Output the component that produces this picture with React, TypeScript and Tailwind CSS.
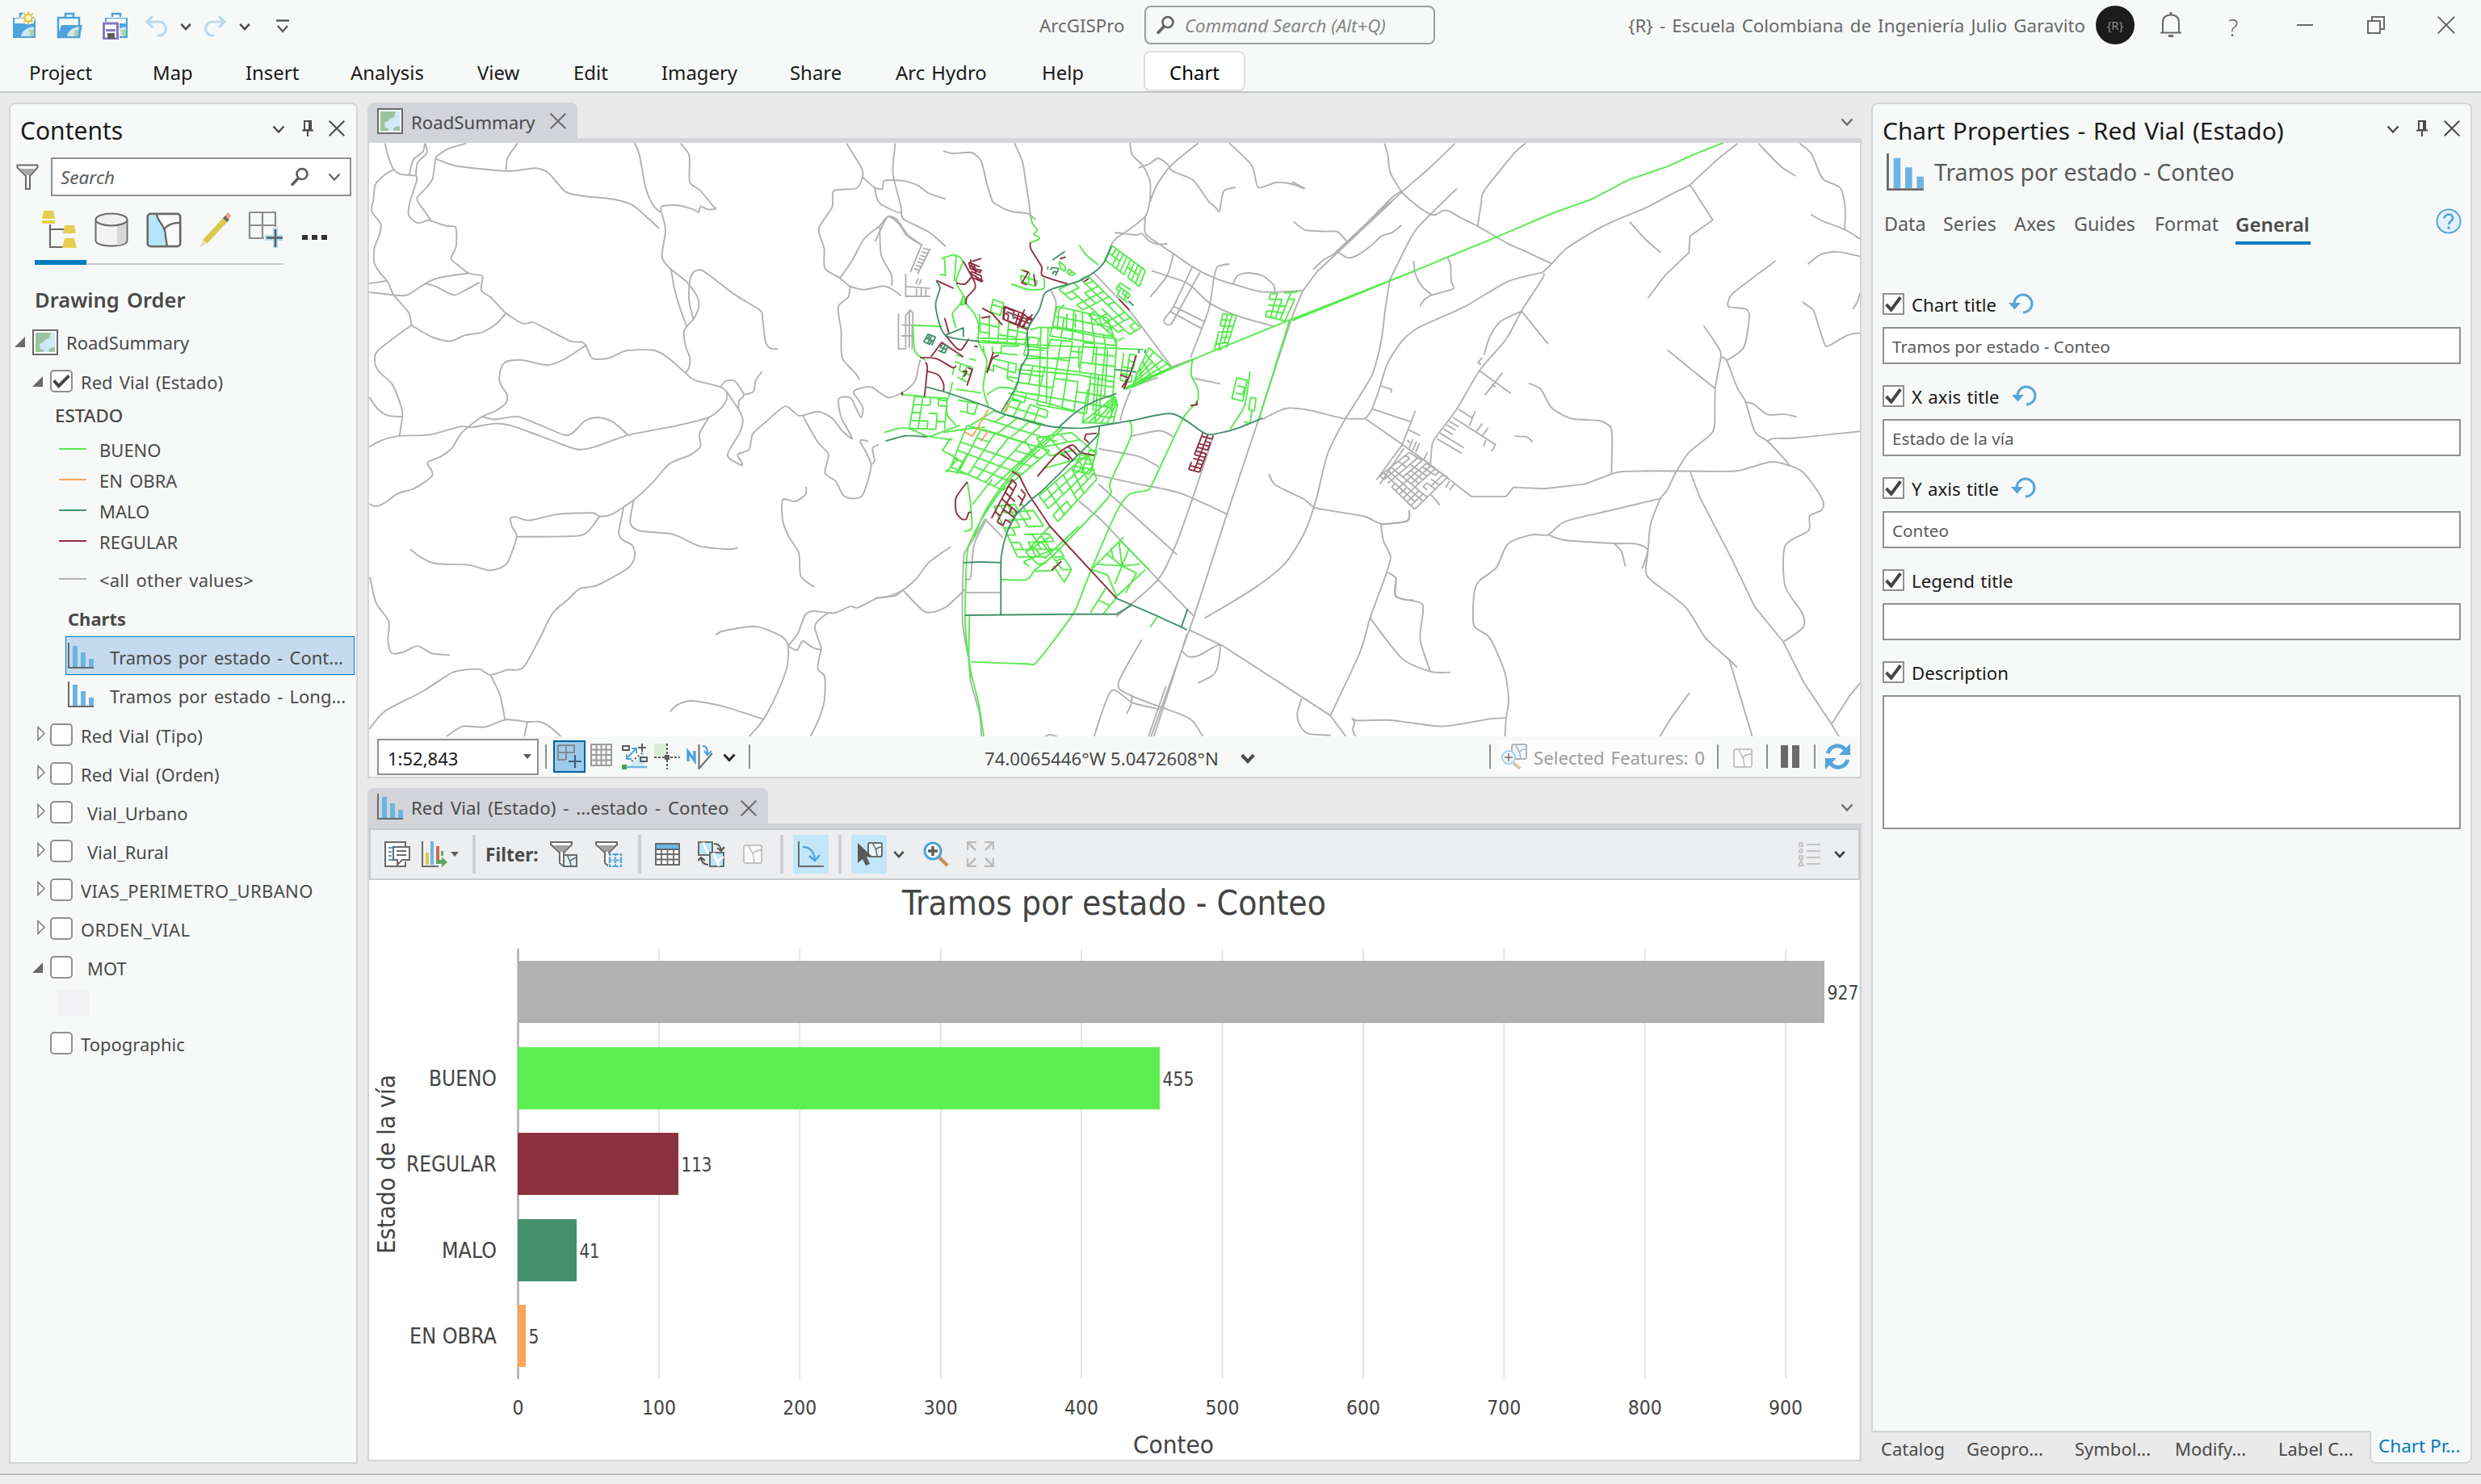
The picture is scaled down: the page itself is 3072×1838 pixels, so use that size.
import React from "react";

type Pt = [number, number];

const parse = (s: string): Pt[] =>
  s.trim().split(/\s+/).map((p) => p.split(",").map(Number) as Pt);

/* Smooth curve through the points of each road (Catmull-Rom to Bezier). */
const curve = (s: string): string => {
  const p = parse(s);
  let d = `M${p[0][0]},${p[0][1]}`;
  for (let i = 0; i < p.length - 1; i++) {
    const a = p[Math.max(0, i - 1)];
    const b = p[i];
    const c = p[i + 1];
    const e = p[Math.min(p.length - 1, i + 2)];
    const k = 8;
    d += `C${b[0] + (c[0] - a[0]) / k},${b[1] + (c[1] - a[1]) / k} ${c[0] - (e[0] - b[0]) / k},${c[1] - (e[1] - b[1]) / k} ${c[0]},${c[1]}`;
  }
  return d;
};

const straight = (s: string): string =>
  "M" + parse(s).map((p) => p.join(",")).join("L");

const curves = (src: string) => src.trim().split("\n").map((l) => curve(l)).join("");
const lines = (src: string) => src.trim().split("\n").map((l) => straight(l)).join("");

/* Street blocks inside a quadrilateral, with a share of segments left out. */
const mesh = (quad: string, n: number, m: number, skip = 0.14): string => {
  const [a, b, c, d] = parse(quad);
  const at = (u: number, v: number): Pt => [
    (a[0] * (1 - u) + b[0] * u) * (1 - v) + (d[0] * (1 - u) + c[0] * u) * v,
    (a[1] * (1 - u) + b[1] * u) * (1 - v) + (d[1] * (1 - u) + c[1] * u) * v,
  ];
  const seg = (p: Pt, q: Pt) =>
    `M${p[0].toFixed(1)},${p[1].toFixed(1)}L${q[0].toFixed(1)},${q[1].toFixed(1)}`;
  const hash = (i: number, j: number, k: number) => {
    const x = Math.sin(i * 12.9898 + j * 78.233 + k * 37.719 + a[0]) * 43758.5453;
    return x - Math.floor(x);
  };
  let out = "";
  for (let i = 0; i <= n; i++)
    for (let j = 0; j <= m; j++) {
      if (i < n && hash(i, j, 1) > skip) out += seg(at(i / n, j / m), at((i + 1) / n, j / m));
      if (j < m && hash(i, j, 2) > skip) out += seg(at(i / n, j / m), at(i / n, (j + 1) / m));
    }
  return out;
};

const WEST = curves(`60,15 68,45 84,78 104,90 145,93
84,78 58,92 33,115 28,150 23,180 48,210 45,235 30,270 30,305 45,328 68,352 84,383 125,425 133,456
170,15 165,35 138,55 127,92
172,15 176,38 150,62 146,92 148,105 128,160 126,190 150,208 178,202 188,203 228,215 256,219 257,265 243,295 262,310 292,330 328,336 330,345 327,372 355,390 395,427 442,452 470,449 500,462 575,495 605,497 617,505 635,537 680,536 730,518 805,517 845,535 893,572 918,589 990,606 1008,618
285,15 235,28 205,45 200,52 192,100 175,122 150,145 150,155 170,180 188,203
200,52 260,70 395,82 440,79 480,75 515,88 560,132 605,142 690,150 745,164 785,193 820,221
427,15 400,50 395,82
752,15 765,40 782,120 800,160 820,180 825,178 828,167 870,165 915,175 930,182 935,168 955,175 977,174 968,165 935,130 905,108 904,45 880,15
825,178 838,225 828,290 850,318 895,350 925,385 930,412 915,442 890,468 893,505 905,535 903,560 893,572
853,320 862,365 878,415 897,460
915,442 903,395 905,350 915,328 935,322 960,335 1030,382 1100,420 1107,440 1115,495 1128,512 1150,514
16,355 63,349
16,376 84,383 122,383 172,355 210,341 292,330
172,355 200,362 250,383 285,370 322,352
133,456 40,518 32,545 42,568 80,600 105,655 108,678 100,725
133,456 190,485 240,495 280,481 330,473 370,452 395,427
16,630 40,660 70,676 108,678
16,752 50,736 100,725 185,722 270,702 300,704 365,695 410,700 490,725 590,757 640,752 735,723 870,700 958,680 995,655 1008,635 1008,618
617,505 555,540 510,553 440,541 395,545 380,565 378,595 398,625 395,645 365,665 330,678 275,715 245,755 215,775 178,790 190,810 188,825 140,853 95,865 60,887 35,896 16,890
330,678 365,685 425,678 480,695 555,722 580,718 615,688 650,680 690,690 735,723
990,606 1005,592 1030,592 1055,625 1042,640 1040,660
1055,625 1082,617 1088,590 1106,569
1008,618 1040,660 1052,685 1045,715 1010,772 1048,796 1050,790 1038,770 1070,758 1080,720 1115,692 1170,653 1208,676 1260,666 1300,682 1325,710 1355,732 1345,712 1325,680 1318,635 1350,632 1365,655 1380,680 1385,655 1360,620 1375,610 1410,607 1455,632 1500,617 1530,592 1540,555 1545,540
958,680 932,720 935,750 905,772 850,792 800,840 750,880 690,915 655,920 635,912 540,915 460,930 425,922 408,925 412,945 425,970 400,1032 375,1047 345,1051 290,1038 200,1035 160,1020 130,1000
655,920 625,955 590,968 425,970
750,880 740,935 765,955 860,964 930,992 1010,1000 1038,997
722,898 708,960 720,978 745,990 753,1015 735,1045 650,1087 600,1096 570,1120 525,1155 490,1215 450,1280 430,1293 400,1293 352,1305 325,1292 290,1292 245,1300 165,1345 60,1393 16,1437
352,1305 378,1352 393,1415
230,1455 275,1430 335,1432 395,1414 455,1419 490,1419 520,1433 548,1455
455,1419 446,1455
18,1067 35,1130 70,1175 68,1220 78,1252 110,1250 150,1235 190,1253 240,1257
1218,675 1260,740 1290,770 1280,815 1310,835 1330,868 1355,877 1385,868 1408,795 1378,738 1400,738
1408,795 1418,785 1412,755 1430,746
1228,848 1226,868 1197,884 1163,880 1163,930 1180,970 1208,1010 1213,1065 1250,1092
1340,15 1382,75 1384,96 1368,124 1305,130 1300,170 1263,222 1278,270 1280,318 1322,342 1350,362 1390,370 1440,361 1465,368 1492,385
1350,362 1345,388 1317,412 1325,470 1328,535 1365,573 1376,589
1322,342 1355,300 1390,245 1432,215 1455,192 1480,200 1510,237 1550,262
1432,215 1436,285 1465,335 1465,360
1384,96 1418,122 1440,125 1445,105 1500,106 1540,118 1568,136 1615,150
1475,15 1468,80 1475,115 1492,182 1440,165 1425,150 1418,122
1492,182 1500,200 1568,230 1615,265
976,1208 1000,1198 1090,1188 1160,1212 1178,1235 1175,1285 1150,1345 1110,1413 1070,1455
1110,1413 1000,1382 910,1368 870,1378 850,1395
1178,1235 1205,1205 1225,1160 1250,1150 1305,1155 1350,1139 1372,1142 1425,1119 1475,1113 1495,1100
1178,1235 1203,1245 1218,1223 1245,1238 1270,1241 1252,1187 1285,1157 1305,1155
1270,1241 1260,1290 1280,1310 1278,1370 1262,1415 1240,1455`);

const NORTH = curves(`1256,177 1266,200 1270,225 1274,250
1168,187 1180,190 1203,189 1215,200 1222,228 1229,250
1399,177 1402,192 1415,205 1424,225 1424,250
1484,177 1450,205 1432,230 1424,250
1410,208 1423,203 1434,196 1445,203 1452,212 1476,222 1490,240 1497,250
1522,177 1550,205 1558,232 1580,226 1600,228 1615,234
1512,250 1516,236 1530,232`);

const CENTER_GRAY =
  curves(`430,18 455,27 500,33 520,50
400,0 430,18
502,0 506,38
837,0 825,40 775,80 745,100 728,122
825,40 823,80 835,98 900,142 955,180 1018,212 1068,228 1150,250 1265,246
740,85 800,92 815,88 835,108 860,118 886,116
1000,0 1018,14 1030,27 1035,0
1068,228 1080,205 1110,197 1150,205 1180,230 1184,247
903,142 885,205 838,264
842,191 890,207 945,228 1005,282 1085,318 1180,345
955,180 903,290 878,325 880,338 895,340 912,312 976,196
1058,172 1025,180 1015,212 1000,300 950,432
562,245 577,280 567,350
1500,0 1360,135 1320,160 1290,188
1236,55 1268,78 1325,82 1358,83 1382,108
1358,138 1385,155 1410,150 1450,122 1480,95 1510,85 1535,65
1503,215 1490,300 1480,380 1458,470 1440,505 1375,610 1330,700 1300,820 1270,910 1215,1000 1130,1070 990,1155
1150,603 1215,573 1280,578 1370,600 1435,602
1168,755 1185,785 1265,825 1300,850 1430,872 1478,893 1550,885 1558,860
1478,893 1485,940 1505,985 1490,1040 1448,1155 1420,1250 1338,1425
1497,1028 1520,1045 1518,1090 1540,1103 1568,1105
815,1215 750,1335 785,1370 930,1425 960,1445 985,1485
682,1485 730,1357 790,1390 865,1408
788,1367 785,1395 773,1420
925,1245 945,1262 975,1258 1030,1230 1025,1290 1010,1315 970,1335
545,1485 560,1478 585,1485
675,755 790,780 920,808 1055,868
695,685 805,706 862,735
785,650 865,635 903,652
1013,650 960,810 910,950 860,1048 745,1150
785,520 765,570 755,607
380,880 345,940 325,970 320,1000 318,1170 335,1270 340,1330 365,1420 370,1485
385,880 350,950 340,1042 325,1045
285,957 225,1000 190,1045 152,1077 110,1095 75,1100
152,1077 215,1138 270,1125 325,1075
1258,1378 1247,1415 1250,1445 1275,1475 1340,1480
1338,1425 1382,1485
1398,1432 1405,1445 1400,1465 1408,1485
75,110 110,42 140,60 165,95 205,120`) +
  lines(`680,195 780,300 898,458 960,435
1508,0 1380,120 1300,195 1262,246 1235,310 1225,340 1140,600 1050,870 960,1150 840,1485
940,1200 848,1485
882,1343 833,1485
903,290 988,332
895,305 982,352
960,490 1033,505
640,830 700,880 860,1048 960,1150
695,783 912,978
860,487 770,520
380,880 430,932
327,1084 424,1084
1338,1425 1040,1232 945,1187
205,118 173,195
228,130 193,200
208,128 226,134
204,138 222,144
200,148 218,154
196,157 214,163
192,166 210,172
188,175 206,181
183,185 200,191
195,212 188,228
204,214 197,230
160,200 160,262 228,262
160,235 228,240
190,240 190,262
203,240 203,262
216,240 216,262
140,310 140,408 162,408
160,405 160,315 172,300 180,308 180,340
170,300 170,405
178,340 178,410
148,342 180,342
148,372 180,372
1475,510 1507,520 1507,530`);

const GREEN =
  curves(`1225,328 1140,602
955,440 952,480 970,520 968,555 930,600 845,780 830,800 780,812 745,860 675,1020 640,1110 620,1150 525,1275 495,1282 340,1276
782,605 785,650 727,780 722,820 570,980 520,1020 495,1048 425,1048
600,625 475,740 390,850 345,930 330,980 325,1170 340,1300 362,1390 377,1485
590,625 470,735 385,850 350,930
337,1150 335,1270 342,1320
506,38 512,60 525,78 515,90 530,98 528,105 508,112
642,120 658,145 695,175
453,228 500,243 543,240 543,210
259,158 295,147 318,165 300,220 320,260 330,285 350,310 362,340 362,390 385,440 375,515 390,570
320,260 310,285 290,310 300,350
180,342 260,346
180,342 183,400 190,422 215,440
100,640 150,627 180,633 220,650 290,660
275,545 275,590 300,620
265,640 330,630 380,625
385,535 420,515 470,520
331,777 340,840 343,905 322,914
290,500 275,550 245,545
225,652 310,620
1115,470 1100,565 1060,630`) +
  lines(`770,520 900,462 1015,413 1225,328 1568,193
768,516 900,458
505,355 530,348 580,350 700,375 745,380 745,400
365,378 505,382
365,390 820,410
495,435 640,432
470,465 640,480 740,500
440,485 475,490
445,530 630,580
580,355 585,300 600,285
605,352 608,310
630,350 632,310
535,350 530,540
555,350 550,560
500,410 545,412
640,405 640,460
690,400 680,580
720,410 712,540
665,520 650,615
695,480 685,615
150,530 155,535 212,540
268,158 270,205 255,200
300,150 295,220
403,270 432,282 422,315 395,305 403,270
400,285 425,292
675,1020 755,940 835,1020
755,940 765,930
675,1020 720,1035 745,1095 825,1020
685,1005 760,1010 740,1060
715,975 760,1010 752,945
780,960 760,1010 810,1005
760,1010 800,1030 770,1085
730,960 735,990
715,1072 672,1140
745,1098 708,1143
695,1105 725,1120
858,1152 838,1180
620,1020 600,1055 570,1010
1078,488 1065,545 1095,553 1107,495 1078,488
1080,510 1100,515 1095,535 1075,530
1117,542 1132,546 1127,580 1111,576 1117,542
1120,580 1115,615 1098,610
697,640 675,750
270,745 330,755
285,655 262,690 305,712
305,712 272,750
345,840 400,770
300,755 330,700
560,900 500,965
640,900 545,990
782,605 775,610`) +
  mesh("500,375 745,400 730,600 455,550", 8, 7, 0.17) +
  mesh("580,290 720,322 745,400 560,372", 6, 3, 0.15) +
  mesh("585,243 665,205 812,350 750,385", 4, 10, 0.2) +
  mesh("365,312 500,350 490,395 367,385", 5, 3, 0.25) +
  mesh("375,400 475,400 460,500 385,460", 4, 4, 0.45) +
  mesh("733,122 825,190 808,235 712,160", 9, 2, 0.08) +
  mesh("755,225 785,245 775,280 738,250", 4, 3, 0.15) +
  mesh("835,405 898,460 788,515 800,480", 5, 4, 0.05) +
  mesh("765,420 798,425 785,500 755,495", 2, 4, 0.2) +
  mesh("1172,255 1248,250 1212,330 1158,318", 4, 4, 0.15) +
  mesh("1040,310 1078,315 1050,405 1016,412", 3, 6, 0.15) +
  mesh("330,620 560,690 430,800 285,735", 6, 5, 0.06) +
  mesh("405,580 600,640 560,690 340,620", 6, 2, 0.15) +
  mesh("455,545 555,580 545,618 430,588", 4, 2, 0.2) +
  mesh("490,660 620,640 690,700 540,740", 4, 3, 0.3) +
  mesh("530,815 665,700 690,770 582,887", 6, 4, 0.08) +
  mesh("650,690 690,690 670,755 625,745", 2, 5, 0.1) +
  mesh("185,540 275,545 268,632 170,628", 4, 4, 0.2) +
  mesh("405,845 500,835 600,985 470,985", 5, 7, 0.26) +
  mesh("470,985 560,930 620,1020 520,1025", 4, 3, 0.3) +
  mesh("740,540 748,560 735,615 650,612", 5, 3, 0.2) +
  mesh("300,425 355,440 330,500 290,480", 3, 3, 0.5) +
  mesh("300,520 370,530 350,590 310,580", 2, 2, 0.3) +
  mesh("585,165 630,200 620,205 590,185", 5, 1, 0.1) +
  mesh("478,188 530,205 520,235 480,220", 2, 2, 0.3) +
  mesh("310,262 325,265 322,285 310,285", 2, 1, 0.1);

const MAROON =
  curves(`506,112 507,130 537,180 540,205 610,228
525,762 580,700 622,675 645,695 683,703
331,777 300,820 300,860 315,880 328,880 335,862 342,862
200,432 245,435 290,460 300,455
215,445 220,460 212,542
220,470 250,480 265,505 265,525
270,370 300,405 315,410 335,380
327,285 330,265 352,240 350,220 320,165
300,225 325,228 345,205
403,417 385,475
418,425 400,435 388,470`) +
  lines(`455,748 475,760 500,810 560,900 745,1100
690,642 660,645 656,658 668,668
230,430 260,390 320,430
245,218 293,240
345,165 370,157
340,160 345,185 372,190
350,205 375,220
268,322 280,365
372,295 400,310 428,342
370,322 395,318
433,290 485,310 510,330
433,290 430,325 500,355
485,310 470,350
490,298 470,345
512,312 480,350
440,305 495,325
485,190 500,195 482,225 497,230
515,200 520,232
800,425 782,480 765,520
755,480 778,488 760,515
565,1022 592,997
332,460 345,465 330,510
318,470 330,470 322,485
350,400 360,402
752,270 780,300
655,222 668,212
588,158 604,153
968,553 968,563 950,565
150,528 150,537
600,690 625,718
612,680 638,705
590,700 615,715`) +
  mesh("985,640 1013,648 975,750 945,742", 2, 10, 0.12) +
  mesh("455,770 492,812 445,908 398,878", 3, 6, 0.25) +
  mesh("335,168 365,180 372,222 345,210", 2, 5, 0.3) +
  mesh("435,292 512,325 498,352 432,325", 6, 2, 0.25);

const TEAL =
  curves(`215,513 270,528 390,570 430,588 545,620 600,627 660,627 780,608 900,588 985,640 1010,645 1075,630 1150,600
730,122 715,160 690,190 640,220 570,240 545,255 530,300 498,355 500,420 480,460 468,510 425,583
585,625 630,585 680,555 745,532
697,622 690,650 620,720 540,800 510,825 465,870 440,920 425,985 424,1060
104,664 160,649 220,652
245,220 255,240 243,290 270,370 365,387
320,1001 370,999 424,1001`) +
  lines(`424,1000 424,1148
325,1147 620,1144 745,1144 788,1118
745,1100 860,1150 940,1187
942,1130 925,1178
270,370 320,350 320,375
567,162 602,137
740,465 800,472
778,275 792,288
808,408 806,420
825,410 823,420
455,310 460,325`) +
  mesh("222,367 243,375 232,398 210,388", 4, 2, 0.1) +
  mesh("262,395 278,400 268,420 250,412", 2, 2, 0.2) +
  mesh("555,180 585,185 575,205 552,195", 3, 2, 0.4);

const ORANGE = lines(`390,575 345,650 322,638
435,558 445,563 438,583
389,635 368,665`);

const EAST =
  curves(`252,15 262,45 268,85 300,133 340,165 380,188 395,187 412,178 430,180 460,195 507,216 590,258 640,278 710,307
445,15 375,75 300,133 120,278
300,130 275,145 190,220 120,278
638,15 608,38 525,130 517,160 507,216
0,108 35,125
450,125 375,190 330,235 265,350
332,300 337,332 355,362 382,383
425,292 433,310 435,350 440,368 382,383 360,395 350,410
1218,15 1155,60 1088,115 1050,132 970,170 880,203 825,228 750,270 710,307 685,328
1275,15 1335,70 1377,94
1388,15 1420,40 1450,100 1498,122 1512,170 1511,224
1418,187 1450,203 1511,224 1553,247
923,205 965,247 1008,280
1410,308 1445,285 1490,278 1553,289
1322,300 1210,375 1192,400 1195,412 1240,417 1250,435 1235,510 1188,542
1125,457 1165,510 1172,533 1157,610 1155,700 1140,725 1085,765 1050,812 1025,857 1007,877 980,940 973,1005 967,1055 985,1078 1075,1140 1130,1215 1195,1268 1217,1287
1195,1268 1228,1365 1258,1455
1027,517 1100,570 1157,610
1172,533 1188,542 1218,610 1240,643 1265,715 1300,738 1345,780 1360,797
1240,643 1260,647 1300,673 1345,672 1380,679
1300,738 1315,731 1375,730 1553,714
1395,400 1425,420 1440,460 1455,500 1465,507 1520,480 1553,475
1553,378 1545,400 1533,418
685,328 590,350 470,412 345,462 300,495 260,550 235,620 215,665 200,683
687,330 685,342 627,422 585,490 512,567 450,660 395,725 383,745 378,793
627,422 570,447 540,485 525,528
647,597 680,612 710,657 765,683 840,688 870,703 875,730 873,818
872,818 900,812 1000,810 1200,811 1240,805 1310,788 1360,797 1395,812 1430,850 1452,885 1448,905 1415,920 1412,955 1348,992 1348,1090 1395,1155 1397,1190 1343,1225
1007,877 860,908 745,933 700,965 655,965 590,987 558,1045 510,1078 497,1110 497,1185 540,1215 580,1295 592,1365 585,1410 582,1455
700,965 745,978 880,986 940,987 972,1002 957,1047
880,986 900,1005 911,1042
585,1410 540,1412 410,1430 270,1415 180,1416 163,1410
608,726 640,727 658,740
285,1070 283,1115 350,1130 358,1150 350,1220 378,1297
213,1167 300,1265 378,1297 432,1299
320,905 315,932 245,940`) +
  lines(`1088,115 1150,201 1088,240 1085,280 1020,335 973,390
627,422 700,502
512,567 598,622
575,572 527,626
520,535 508,547 516,552
545,600 556,606
220,660 323,690
337,664 300,748 230,832
318,710 350,724
200,683 300,745 378,795 490,872 585,872 605,850 690,853 800,842 872,818
1088,812 1115,875 1200,1020 1265,1140 1343,1225 1400,1325 1475,1425 1495,1455
1475,1425 1525,1355 1553,1325
1087,1348 1040,1405 1005,1455
455,660 495,683
500,665 485,700
440,680 556,746 545,763
430,690 455,703
422,698 447,711
414,708 440,722
404,718 470,754
396,732 463,767
520,695 503,715
536,705 520,725
530,735 523,750
305,755 240,842
315,735 322,742
330,733 320,755
340,738 330,760
348,742 338,764
370,765 360,782
430,835 420,850
443,842 430,857
380,868 404,893`) +
  mesh("320,765 425,825 335,903 240,822", 9, 8, 0.18);

const EAST_GREEN = lines(`0,445 195,375 420,293 560,242 710,185 820,150 920,103 1030,70 1095,43 1180,13`);

function RoadMap() {
  const gray = "#b1b1b1";
  return (
    <svg viewBox="457 177 1846 735" className="block h-[735px] w-[1846px] bg-white" fill="none" strokeWidth="1.9" strokeLinejoin="round">
      <g transform="translate(450 170) scale(.4464 .5102)" stroke={gray}>
        <path d={WEST} vectorEffect="non-scaling-stroke" />
      </g>
      <path d={NORTH} stroke={gray} />
      <g transform="translate(1600 170) scale(.4528 .5102)">
        <path d={EAST} stroke={gray} vectorEffect="non-scaling-stroke" />
        <path d={EAST_GREEN} stroke="#55ea4b" vectorEffect="non-scaling-stroke" />
      </g>
      <g transform="translate(1050 250) scale(.4464)">
        <path d={CENTER_GRAY} stroke={gray} vectorEffect="non-scaling-stroke" />
        <path d={GREEN} stroke="#55ea4b" vectorEffect="non-scaling-stroke" />
        <path d={ORANGE} stroke="#f7a55d" vectorEffect="non-scaling-stroke" />
        <path d={MAROON} stroke="#8c3141" vectorEffect="non-scaling-stroke" />
        <path d={TEAL} stroke="#45916e" vectorEffect="non-scaling-stroke" />
      </g>
    </svg>
  );
}

/* ---------- icons ---------- */

type IconProps = { c?: string; vb?: string; children: React.ReactNode };
const Ico = ({ c = "w-8 h-8", vb = "0 0 32 32", children }: IconProps) => (
  <svg viewBox={vb} className={`block shrink-0 ${c}`} fill="none">
    {children}
  </svg>
);

const Chevron = ({ c = "w-4 h-4", stroke = "#4a4a4a", w = 2.4 }: { c?: string; stroke?: string; w?: number }) => (
  <Ico c={c} vb="0 0 16 16">
    <path d="M1.5 4.5 8 11.5l6.5-7" stroke={stroke} strokeWidth={w} />
  </Ico>
);

const Close = ({ c = "w-5 h-5", stroke = "#4a4a4a", w = 2 }: { c?: string; stroke?: string; w?: number }) => (
  <Ico c={c} vb="0 0 20 20">
    <path d="m.7.7 18.6 18.6M19.3.7.7 19.3" stroke={stroke} strokeWidth={w} />
  </Ico>
);

const Pin = ({ c = "" }: { c?: string }) => (
  <Ico c={`w-4 h-5 ${c}`} vb="0 0 16 20">
    <path d="M4 1h8v11H4zM1 12.5h14M8 13v7" stroke="#4a4a4a" strokeWidth="2" />
    <path d="M10.5 1v11" stroke="#4a4a4a" strokeWidth="3" />
  </Ico>
);

const Magnifier = ({ c = "" }: { c?: string }) => (
  <Ico c={`w-6 h-6 ${c}`} vb="0 0 24 24">
    <circle cx="15" cy="8.5" r="6.5" stroke="#5f5f5f" strokeWidth="2.6" />
    <path d="M10.5 13.5 2 22.5" stroke="#5f5f5f" strokeWidth="3.4" />
  </Ico>
);

const MapGlyph = ({ c = "" }: { c?: string }) => (
  <Ico c={`w-8 h-8 ${c}`}>
    <path d="M1 1h30v30H1z" fill="#fff" stroke="#6a6a6a" strokeWidth="2" />
    <path d="M4 4h24v24H4z" fill="#d0e8f7" />
    <path d="M4 4h19l-2 7-5 2-3 3-4 2 1 6 5 2-2 2H4z" fill="#9cc49c" />
    <path d="m28 22-5 1-3 2 1 3h7z" fill="#9cc49c" />
  </Ico>
);

const BarsGlyph = ({ c = "w-8 h-8" }: { c?: string }) => (
  <Ico c={c}>
    <path d="M6 4h6v26H6zM16 12h6v18h-6zM26 20h6v10h-6z" fill="#6cb5e3" />
    <path d="M1 0v31h31" stroke="#6a6a6a" strokeWidth="2" />
  </Ico>
);

const Funnel = ({ c = "" }: { c?: string }) => (
  <Ico c={`w-7 h-8 ${c}`} vb="0 0 28 32">
    <path d="M1.5 1.5h25v3L17 15v16h-5V15L1.5 4.5z" fill="#fafafa" stroke="#6a6a6a" strokeWidth="2" />
    <path d="M4 6h20l-7 8h-5z" fill="#a8a8a8" />
  </Ico>
);

const Sun = () => (
  <g>
    <circle cx="22" cy="9" r="8.5" fill="#f7f9f8" />
    <path d="M22 1v16M14 9h16M16.5 3.5l11 11M27.5 3.5l-11 11" stroke="#e0c24c" strokeWidth="2" />
    <circle cx="22" cy="9" r="4.5" fill="#fbf3c8" stroke="#e0c24c" strokeWidth="2" />
  </g>
);

const FolderMap = ({ kind, c = "" }: { kind: "new" | "open" | "save"; c?: string }) => (
  <Ico c={`w-9 h-9 ${c}`} vb="0 0 36 36">
    <path d="M12 8V4h10v4" stroke="#4da3dc" strokeWidth="2.5" />
    {kind === "open" ? (
      <>
        <path d="M3 9h26v24H3z" fill="#f7f9f8" stroke="#4da3dc" strokeWidth="2.5" />
        <path d="M2 33 7 18h26l-3 15z" fill="#4da3dc" />
        <path d="M14 32c1-6 6-11 15-12l-2 12z" fill="#cfe6f4" />
        <path d="M24 24h4l-1 8h-5z" fill="#a9d3a0" />
      </>
    ) : (
      <>
        <path d="M3 9h28v25H3z" fill="#4da3dc" />
        <path d="M5 10h24v6H5z" fill="#f7f9f8" />
        <path d="M13 32c1-6 6-11 16-12v12z" fill="#cfe6f4" />
        <path d="M23 24h6v8h-4z" fill="#a9d3a0" />
      </>
    )}
    {kind === "new" && <Sun />}
    {kind === "save" && (
      <>
        <path d="M-1 14h22v23H-1z" fill="#f7f9f8" />
        <path d="M1.5 16h17v19h-17z" fill="#fff" stroke="#8a78bd" strokeWidth="3" />
        <path d="M4 24.5h12" stroke="#8a78bd" strokeWidth="3" />
        <path d="M6 28h9v7H6z" fill="#5f5f5f" />
      </>
    )}
  </Ico>
);

const Undo = ({ c = "", flip = false }: { c?: string; flip?: boolean }) => (
  <Ico c={`w-7 h-7 ${flip ? "-scale-x-100" : ""} ${c}`} vb="0 0 28 28">
    <path d="M9 1 2 8l7 7M3 8h14a8.5 8.5 0 0 1 0 17h-2" stroke="#b9d9ef" strokeWidth="3.2" />
  </Ico>
);

const Reset = ({ c = "" }: { c?: string }) => (
  <Ico c={`w-8 h-7 ${c}`} vb="0 0 32 28">
    <path d="M7 13A11 11 0 1 1 18 24" stroke="#55a5dc" strokeWidth="3" />
    <path d="M0 12h15l-7.5 8.500z" fill="#55a5dc" />
  </Ico>
);

const PolyMap = ({ c = "w-6 h-6", stroke = "#b4b4b4", fill = "#fafafa" }: { c?: string; stroke?: string; fill?: string }) => (
  <Ico c={c} vb="0 0 24 24">
    <rect x="1" y="1" width="22" height="22" rx="2" fill="#fafafa" stroke={stroke} strokeWidth="1.500" />
    <path d="M2 2h6c1 5 4 8 5 12v8H2z" fill={fill} />
    <path d="M7 1c1 6 6 8 6 14 0 3 1 5 1 8M12 12c2-4 6-5 11-5" stroke={stroke} strokeWidth="1.300" />
  </Ico>
);

const Sep = ({ c = "" }: { c?: string }) => <div className={`h-[30px] w-[2px] shrink-0 bg-[#8f8f8f] ${c}`} />;
const ToolSep = ({ c = "" }: { c?: string }) => <div className={`h-12 w-1 shrink-0 bg-[#cfcfd1] ${c}`} />;

/* ---------- header ---------- */

function TitleBar() {
  return (
    <div className="flex h-[62px] items-center text-[22.3px] text-[#6a6a6a]">
      <FolderMap kind="new" c="ml-[13px]" />
      <FolderMap kind="open" c="ml-5" />
      <FolderMap kind="save" c="ml-[22px]" />
      <Undo c="ml-[17px] mt-1" />
      <Chevron c="ml-[15px] w-3.5 h-3.5 mt-1" w={3} />
      <Undo c="ml-[15px] mt-1" flip />
      <Chevron c="ml-4 w-3.5 h-3.5 mt-1" w={3} />
      <Ico c="ml-8 mt-1 w-4 h-[18px]" vb="0 0 16 18">
        <path d="M0 1.5h16M2 8l6 7 6-7" stroke="#5a5a5a" strokeWidth="2.4" />
      </Ico>
      <span className="ml-[929px] w-[103px] pt-[3px]">ArcGISPro</span>
      <div className="ml-[27px] flex h-12 w-[360px] items-center rounded-lg border-2 border-[#9d9fa0]">
        <Magnifier c="ml-3" />
        <span className="ml-3 pt-[3px] text-[#868686] italic">Command Search (Alt+Q)</span>
      </div>
      <span className="ml-[239px] w-[563px] pt-[3px] [word-spacing:2.3px]">{"{R} - Escuela Colombiana de Ingeniería Julio Garavito"}</span>
      <div className="ml-4 flex size-12 items-center justify-center rounded-full bg-[#1b1b1b] text-[15px] text-[#8a8a8a]">{"{R}"}</div>
      <Ico c="ml-8 w-6.5 h-8" vb="0 0 26 32">
        <path d="M3 25.5V13C3 6 7 3.5 13 3.5S23 6 23 13v12.500M0 25.500h26" stroke="#6a6a6a" strokeWidth="2" />
        <path d="M13 0v4M10 29.500h6" stroke="#6a6a6a" strokeWidth="3" />
      </Ico>
      <span className="ml-[58px] w-[14px] pt-1 text-[29px] font-light">?</span>
      <div className="ml-[71px] h-[2px] w-5 bg-[#6a6a6a]" />
      <Ico c="ml-[67px] w-5.5 h-5.5" vb="0 0 22 22">
        <path d="M1 6h15v15H1zM6 6V1h15v15h-5" stroke="#6a6a6a" strokeWidth="2" />
      </Ico>
      <Close c="ml-[65px] w-[22px] h-[22px]" stroke="#6a6a6a" w={1.7} />
    </div>
  );
}

function Menu() {
  return (
    <div className="flex h-[51px] items-center text-[23.9px] text-[#1a1a1a]">
      <div className="flex w-[1416px] pt-[5px] pl-9">
        <span className="w-[153px]">Project</span>
        <span className="w-[115px]">Map</span>
        <span className="w-[130px]">Insert</span>
        <span className="w-[157px]">Analysis</span>
        <span className="w-[119px]">View</span>
        <span className="w-[109px]">Edit</span>
        <span className="w-[159px]">Imagery</span>
        <span className="w-[131px]">Share</span>
        <span className="w-[181px] [word-spacing:2px]">Arc Hydro</span>
        <span>Help</span>
      </div>
      <div className="flex h-12.5 w-[126px] items-center justify-center rounded-lg border-2 border-[#dedfdf] bg-white pt-[5px] text-black">Chart</div>
    </div>
  );
}

/* ---------- contents pane ---------- */

const Check = ({ on = false, c = "" }: { on?: boolean; c?: string }) => (
  <div className={`flex size-7 shrink-0 items-center justify-center rounded-[5px] border-2 border-[#8f8f8f] bg-white ${c}`}>
    {on && (
      <svg viewBox="0 0 20 20" className="size-5.5" fill="none">
        <path d="m1.5 9.5 5.5 6L18.5 4" stroke="#444" strokeWidth="3.6" />
      </svg>
    )}
  </div>
);

const Opened = ({ c = "" }: { c?: string }) => (
  <Ico c={`w-[13px] h-[13px] ${c}`} vb="0 0 13 13">
    <path d="M13 0v13H0z" fill="#6a6a6a" />
  </Ico>
);
const Collapsed = ({ c = "" }: { c?: string }) => (
  <Ico c={`w-[10px] h-[19px] ${c}`} vb="0 0 10 19">
    <path d="M1 1.5 9 9.5l-8 8z" fill="#fff" stroke="#7a7a7a" strokeWidth="1.5" />
  </Ico>
);

const LEGEND = [
  { label: "BUENO", bar: "bg-[#55ea4b]" },
  { label: "EN OBRA", bar: "bg-[#f7a55d]" },
  { label: "MALO", bar: "bg-[#45916e]" },
  { label: "REGULAR", bar: "bg-[#8c3141]" },
];

const LAYERS = [
  { label: "Red Vial (Tipo)", pad: "ml-[10px]" },
  { label: "Red Vial (Orden)", pad: "ml-[10px]" },
  { label: "Vial_Urbano", pad: "ml-[18px]" },
  { label: "Vial_Rural", pad: "ml-[18px]" },
  { label: "VIAS_PERIMETRO_URBANO", pad: "ml-[10px] tracking-[0.35px]" },
  { label: "ORDEN_VIAL", pad: "ml-[10px] tracking-[0.35px]" },
];

function Contents() {
  return (
    <section className="ml-[11px] flex h-[1686px] w-[432px] flex-col rounded-t-lg border-2 border-[#d3d4d9] bg-[#f7f9f8] text-[22px] text-[#4a4a4a] [word-spacing:2.5px]">
      <div className="flex h-[66px] items-center">
        <h2 className="ml-3 w-[312px] text-[30px] text-[#1a1a1a]">Contents</h2>
        <Chevron c="w-4 h-4 -mt-1" />
        <Pin c="ml-[20px] -mt-1.5" />
        <Close c="ml-[18px] w-5 h-5 -mt-1.5" />
      </div>
      <div className="flex h-12">
        <Funnel c="ml-[7px] mt-2" />
        <div className="ml-[15px] flex h-12 w-[372px] items-center border-2 border-[#909090] bg-white">
          <span className="ml-2.5 w-[284px] pt-0.5 text-[22.5px] text-[#5a5a5a] italic">Search</span>
          <Magnifier />
          <Chevron c="ml-[23px] w-4 h-4" stroke="#6a6a6a" />
        </div>
      </div>
      <div className="mt-[18px] flex h-[61px] text-[#6a6a6a]">
        <Ico c="ml-[37px] w-12 h-12" vb="0 0 48 48">
          <path d="M12 17v28h16M12 23h18" stroke="#6a6a6a" strokeWidth="2.2" />
          <path d="M4 0h12l2 10H2zM2 12h16v4H2zM30 18h12l2 10H28zM28 24h16M30 34h12l3 12H27z" fill="#e5cf50" />
        </Ico>
        <Ico c="ml-[19px] mt-0.5 w-10.5 h-11" vb="0 0 42 44">
          <path d="M1.5 9v26c0 9 39 9 39 0V9" fill="#f4f4f4" stroke="#6a6a6a" strokeWidth="2" />
          <path d="M28 15v26c6-1 11-3 11-6V10z" fill="#d8d8d8" />
          <ellipse cx="21" cy="9" rx="19.5" ry="7.5" fill="#f0f0f0" stroke="#6a6a6a" strokeWidth="2" />
        </Ico>
        <PolyMap c="ml-[22px] mt-0.5 w-11 h-11" stroke="#6a6a6a" fill="#b3e7f9" />
        <Ico c="ml-[22px] w-10 h-12" vb="0 0 40 48">
          <path d="M1 45 5 35 32 6l5 5L10 40z" fill="#dcc84a" />
          <path d="M1 45 4.500 36l5 4z" fill="#f3dcb4" />
          <path d="m29 9 5 5 3-3-5-5z" fill="#6a6a6a" />
          <path d="m32 6 3-4 4 4-3 5z" fill="#e9a08c" />
        </Ico>
        <Ico c="ml-5 mt-px w-11 h-[46px]" vb="0 0 44 46">
          <path d="M2 1h32v18M2 1v32h18M18 1v32M2 17h32" stroke="#8d8d8d" strokeWidth="2.2" />
          <path d="M31 20h6v25h-6zM21 29h22v7H21z" fill="#a9dcf7" />
          <path d="M34 22v22M23 32.500h20" stroke="#5a5a5a" strokeWidth="2.4" />
        </Ico>
        <Ico c="ml-[22px] mt-[29px] w-8 h-2" vb="0 0 32 8">
          <path d="M1 1h7v6H1zM13 1h7v6h-7zM25 1h7v6h-7z" fill="#333" />
        </Ico>
      </div>
      <div className="ml-[30px] flex h-[6px] w-[308px] items-end">
        <div className="h-[6px] w-16 bg-[#007ac2]" />
        <div className="h-[2px] flex-1 bg-[#c8c8c8]" />
      </div>
      <div className="mt-[16px] ml-[30px] flex h-[53px] items-center pt-0.5 text-[25.500px] font-semibold">Drawing Order</div>
      <div className="flex h-[53px] items-center">
        <Opened c="ml-[5px]" />
        <MapGlyph c="ml-[9px]" />
        <span className="ml-[10px] pt-px">RoadSummary</span>
      </div>
      <div className="flex h-11 items-center">
        <Opened c="ml-[27px]" />
        <Check on c="ml-[9px]" />
        <span className="ml-[10px] pt-px">Red Vial (Estado)</span>
      </div>
      <div className="ml-[55px] flex h-[43px] items-center pb-px text-[22.400px] font-medium">ESTADO</div>
      {LEGEND.map((l) => (
        <div key={l.label} className="flex h-[38px] items-center">
          <div className={`ml-[60px] h-[2px] w-[34px] ${l.bar}`} />
          <span className="ml-4 pt-0.5">{l.label}</span>
        </div>
      ))}
      <div className="mt-[3px] flex h-[50px] items-center">
        <div className="ml-[60px] h-[2px] w-[34px] bg-[#b1b1b1]" />
        <span className="ml-4 pt-0.5 tracking-[0.2px]">&lt;all other values&gt;</span>
      </div>
      <div className="ml-[71px] flex h-[46px] items-center pt-0.5 font-bold">Charts</div>
      <div className="ml-[68px] flex h-12 w-[358px] items-center border border-[#007ac2] bg-[#c5daed]">
        <BarsGlyph c="ml-0.5 w-8 h-8" />
        <span className="ml-5 pt-[3px]">Tramos por estado - Cont...</span>
      </div>
      <div className="ml-[68px] flex h-12 w-[358px] items-center">
        <BarsGlyph c="ml-[3px] w-8 h-8" />
        <span className="ml-5 pt-[3px]">Tramos por estado - Long...</span>
      </div>
      <div className="pt-0.5">
        {LAYERS.map((l) => (
          <div key={l.label} className="flex h-12 items-center">
            <Collapsed c="ml-[33px] -mt-1" />
            <Check c="ml-[6px]" />
            <span className={`pt-0.5 ${l.pad}`}>{l.label}</span>
          </div>
        ))}
      </div>
      <div className="flex h-12 items-center">
        <Opened c="ml-[27px]" />
        <Check c="ml-[9px]" />
        <span className="ml-[18px] pt-0.5">MOT</span>
      </div>
      <div className="mt-[4px] ml-[57px] h-8 w-10 bg-[#f1f1f3]" />
      <div className="mt-[10px] flex h-12 items-center">
        <Check c="ml-[49px]" />
        <span className="ml-[10px] pt-0.5">Topographic</span>
      </div>
    </section>
  );
}

/* ---------- map and chart panes ---------- */

function MapPane() {
  return (
    <section>
      <div className="flex h-[44px] justify-between">
        <div className="flex h-[50px] w-[260px] items-center rounded-t-lg bg-[#d3d4d9] text-[22.200px] text-[#4a4a4a]">
          <MapGlyph c="ml-3 -mt-1" />
          <span className="ml-[10px] w-[155px]">RoadSummary</span>
          <Close c="ml-[17px] -mt-1 w-5 h-5" stroke="#6a6a6a" />
        </div>
        <Chevron c="mt-4 mr-[10px] w-4 h-4" stroke="#6a6a6a" />
      </div>
      <div className="h-[6px] bg-[#d3d4d9]" />
      <div className="border-x-2 border-b-2 border-[#d3d4d9]">
        <RoadMap />
        <div className="flex h-[50px] items-center bg-[#f7f9f8] text-[22px] text-[#4a4a4a]">
          <div className="ml-[10px] flex h-[45px] w-[200px] items-center justify-between border-2 border-[#909090] bg-white px-[11px] text-[22px] text-[#1a1a1a]">
            <span className="pt-[3px]">1:52,843</span>
            <Ico c="w-[10px] h-[6px] -mr-1" vb="0 0 10 6">
              <path d="M0 0h10L5 6z" fill="#5a5a5a" />
            </Ico>
          </div>
          <Sep c="ml-2" />
          <div className="ml-2 flex size-10 items-center justify-center border-2 border-[#00619b] bg-[#9ccbec]">
            <Ico c="w-8 h-8">
              <path d="M2 2h20v10M2 2v18h10M12 2v18M2 11h20" stroke="#8a8a8a" strokeWidth="2" />
              <path d="M23 14v16M15 22h16" stroke="#3f5f78" strokeWidth="2.2" />
            </Ico>
          </div>
          <Ico c="ml-[6px] -mt-1 w-[27px] h-[28px]" vb="0 0 27 28">
            <path d="M1 1h25v26H1zM7.500 1v26M13.500 1v26M19.500 1v26M1 7.500h25M1 14h25M1 20.500h25" stroke="#9a9a9a" strokeWidth="2" />
          </Ico>
          <Ico c="ml-3 w-8 h-8">
            <path d="M8 28 28 11v17z" fill="#d3e9f7" />
            <path d="M1 3h8v5H1zM23 17h8v5h-8zM20 5h10M25 0v10" stroke="#5a5a5a" strokeWidth="2" />
            <path d="M6 18 17 7M12 6h6v6M6 13v6h6" stroke="#4da3dc" strokeWidth="1.800" />
            <path d="M12 22l14-11" stroke="#5a5a5a" strokeWidth="2" strokeDasharray="2 3" />
            <path d="M6 29h25" stroke="#6cb5e3" strokeWidth="2.400" />
            <path d="M0 26h6v6H0z" fill="#4f9d55" />
          </Ico>
          <Ico c="ml-2 w-8 h-8">
            <path d="M0 0h15v15H0z" fill="#d8ecd6" />
            <path d="M0 17h32M16 0v32" stroke="#5a5a5a" strokeWidth="2" strokeDasharray="3 2" />
            <path d="M13 14h6v6h-6z" fill="#5a5a5a" />
          </Ico>
          <Ico c="ml-2 w-8 h-8">
            <path d="M2 22V10l8 11V9" stroke="#4da3dc" strokeWidth="3.400" />
            <path d="M15.500 1v30L32 12" stroke="#6a6a6a" strokeWidth="2" />
            <path d="M20 3c5 0 6 3 6 10M22 9l4 5 5-5" stroke="#4da3dc" strokeWidth="2.200" />
          </Ico>
          <Chevron c="ml-[13px] mt-0.5 w-4 h-4" stroke="#2a2a2a" w={3} />
          <Sep c="ml-[16px]" />
          <span className="ml-[290px] w-[297px] pt-[7px] text-[22.200px]">74.0065446°W 5.0472608°N</span>
          <Chevron c="ml-[20px] mt-1 w-[18px] h-[18px]" w={3.6} />
          <Sep c="ml-[290px]" />
          <div className="ml-[8px] flex h-10 w-[265px] items-center bg-[#fcfcfc] text-[#9d9d9d]">
            <Ico c="ml-[5px] w-8 h-8">
              <rect x="13" y="1" width="18" height="18" rx="2" fill="#eef8fc" stroke="#b4b4b4" strokeWidth="2" />
              <path d="M18 2c1 5 5 6 5 11 0 2 1 4 1 6M22 11c2-3 5-4 8-4" stroke="#b4b4b4" strokeWidth="1.600" />
              <circle cx="9" cy="17" r="8" fill="#f3fafe" stroke="#a5cfed" strokeWidth="2" />
              <path d="M4 17h10M9 12v10" stroke="#8d8d8d" strokeWidth="2" />
              <path d="m15 24 8 7" stroke="#dcc3a6" strokeWidth="4" />
            </Ico>
            <span className="ml-[8px] pt-1 text-[22.200px] [word-spacing:2px]">Selected Features: 0</span>
          </div>
          <Sep c="ml-[7px]" />
          <PolyMap c="ml-[18px] mt-1 w-6 h-6" />
          <Sep c="ml-[17px]" />
          <div className="ml-4 h-7 w-[9px] bg-[#6a6a6a]" />
          <div className="ml-[5px] h-7 w-[9px] bg-[#6a6a6a]" />
          <Sep c="ml-[18px]" />
          <Ico c="ml-[11px] w-[33px] h-[34px]" vb="0 0 33 34">
            <path d="M4 13C8 2 20 1 26 9" stroke="#55a5dc" strokeWidth="5" />
            <path d="M32 1v14H18z" fill="#55a5dc" />
            <path d="M29 21C25 32 13 33 7 25" stroke="#55a5dc" strokeWidth="5" />
            <path d="M1 33V19h14z" fill="#55a5dc" />
          </Ico>
        </div>
      </div>
    </section>
  );
}

const BARS = [
  { label: "", value: 927, end: 2259, y: 1190, fill: "#b1b1b1", tl: 39 },
  { label: "BUENO", value: 455, end: 1436, y: 1297, fill: "#5bef50", w: 84, tl: 39 },
  { label: "REGULAR", value: 113, end: 840, y: 1403, fill: "#8c3141", w: 112, tl: 38 },
  { label: "MALO", value: 41, end: 714, y: 1510, fill: "#45916e", w: 68, tl: 25 },
  { label: "EN OBRA", value: 5, end: 651, y: 1616, fill: "#f7a55d", w: 108, tl: 13 },
];

function BarChart() {
  const ticks = Array.from({ length: 10 }, (_, i) => i * 100);
  return (
    <svg viewBox="457 1090 1845 718" className="block h-[718px] w-[1845px] bg-white font-['DejaVu_Sans_Condensed','DejaVu_Sans',sans-serif]" fill="#444">
      <text x="1117" y="1133" fontSize="42" textLength="525" lengthAdjust="spacingAndGlyphs">Tramos por estado - Conteo</text>
      {ticks.map((t) => (
        <g key={t}>
          <path d={`M${641.5 + t * 1.744} 1175V1708`} stroke={t ? "#e4e4e4" : "#9a9a9a"} strokeWidth="2" />
          <text x={641.5 + t * 1.744} y="1752" fontSize="25.5" textAnchor="middle" textLength={t ? 42 : 14} lengthAdjust="spacingAndGlyphs">{t}</text>
        </g>
      ))}
      {BARS.map((b) => (
        <g key={b.value}>
          <rect x="641" y={b.y} width={b.end - 641} height="77" fill={b.fill} />
          {b.label && (
            <text x="615" y={b.y + 48} fontSize="26.5" textAnchor="end" textLength={b.w} lengthAdjust="spacingAndGlyphs">{b.label}</text>
          )}
          <text x={b.end + 3.5} y={b.y + 47.5} fontSize="24" textLength={b.tl} lengthAdjust="spacingAndGlyphs">{b.value}</text>
        </g>
      ))}
      <text transform="translate(489 1553) rotate(-90)" fontSize="30" textLength="222" lengthAdjust="spacingAndGlyphs">Estado de la vía</text>
      <text x="1403" y="1800" fontSize="30" textLength="100" lengthAdjust="spacingAndGlyphs">Conteo</text>
    </svg>
  );
}

function ChartPane() {
  return (
    <section className="mt-3">
      <div className="flex h-[44px] justify-between">
        <div className="flex h-[50px] w-[496px] items-center rounded-t-lg bg-[#d3d4d9] text-[22.200px] text-[#4a4a4a]">
          <BarsGlyph c="ml-3 -mt-1 w-8 h-8" />
          <span className="ml-[10px] w-[390px] tracking-[0.05px] [word-spacing:3px]">Red Vial (Estado) - ...estado - Conteo</span>
          <Close c="ml-[18px] w-5 h-5" stroke="#6a6a6a" />
        </div>
        <Chevron c="mt-4 mr-[10px] w-4 h-4" stroke="#6a6a6a" />
      </div>
      <div className="h-[6px] bg-[#d3d4d9]" />
      <div className="border-x-2 border-b-2 border-[#d3d4d9]">
        <div className="flex h-16 items-center border-2 border-[#c9cacb] bg-[#edeef0]">
          <Ico c="ml-[17px] w-8 h-8">
            <path d="M26 8V1H1v30h25v-6" fill="#fafafa" stroke="#6a6a6a" strokeWidth="2" />
            <path d="M5 8h6M5 13h4M5 18h4M5 23h6" stroke="#4da3dc" strokeWidth="2" />
            <path d="M11 7h20v16h-9l-6 6v-6h-5z" fill="#fff" stroke="#6a6a6a" strokeWidth="2" />
            <path d="M15 12h12M15 17h12" stroke="#6a6a6a" strokeWidth="2" />
          </Ico>
          <Ico c="ml-[14px] w-8 h-8">
            <path d="M5 14h4v15H5z" fill="#e0c84c" />
            <path d="M11 0h4v29h-4z" fill="#6cb5e3" />
            <path d="M18 6h4v18h-4z" fill="#cc6a50" />
            <path d="M24 12h3v6h-3z" fill="#5fa864" />
            <path d="M1 0v31h20" stroke="#6a6a6a" strokeWidth="2" />
            <path d="M18 23h7v-4l7 7-7 6v-4h-7z" fill="#5fa864" />
          </Ico>
          <Ico c="ml-1 w-[10px] h-[6px]" vb="0 0 10 6">
            <path d="M0 0h10L5 6z" fill="#5a5a5a" />
          </Ico>
          <ToolSep c="ml-[17px]" />
          <span className="ml-[12px] w-[66px] pt-0.5 text-[22.600px] font-bold text-[#4a4a4a]">Filter:</span>
          <Ico c="ml-[14px] w-[34px] h-8" vb="0 0 34 32">
            <path d="M1 1h26v3L17 14v17l-5-4V14L1 4z" fill="#fafafa" stroke="#6a6a6a" strokeWidth="2" />
            <path d="M4 5h20l-7 8h-5z" fill="#a0a0a0" />
            <path d="M17 17h16v14H17z" fill="#dff4fd" stroke="#6a6a6a" strokeWidth="2" />
            <path d="M22 17c0 6 4 6 4 14M25 24l7-4" stroke="#6a6a6a" strokeWidth="1.600" />
          </Ico>
          <Ico c="ml-[22px] w-[34px] h-8" vb="0 0 34 32">
            <path d="M1 1h26v3L17 14v17l-5-4V14L1 4z" fill="#fafafa" stroke="#6a6a6a" strokeWidth="2" />
            <path d="M4 5h20l-7 8h-5z" fill="#a0a0a0" />
            <path d="M16 15h18v17H16z" fill="#edeef0" />
            <path d="M17 16h16M17 23.500h16M17 31h16M18 15v17M25 15v17M32 15v17" stroke="#4da3dc" strokeWidth="2.200" strokeDasharray="3 1.500" />
          </Ico>
          <ToolSep c="ml-[19px]" />
          <Ico c="ml-[17px] w-8 h-7" vb="0 0 32 28">
            <path d="M1 1h29v26H1z" fill="#fff" stroke="#6a6a6a" strokeWidth="2" />
            <path d="M2 2h27v5H2z" fill="#6cb5e3" />
            <path d="M1 8h29M1 14h29M1 20.500h29M8 8v19M15.500 8v19M23 8v19" stroke="#6a6a6a" strokeWidth="1.800" />
          </Ico>
          <Ico c="ml-[21px] w-[34px] h-8" vb="0 0 34 32">
            <path d="M1 1h17v16H1z" fill="#b9e6f8" stroke="#6a6a6a" strokeWidth="2" />
            <path d="M15 14h17v17H15z" fill="#b9e6f8" stroke="#6a6a6a" strokeWidth="2" />
            <path d="M7 1c0 6 4 8 6 15M20 14c0 7 5 9 6 17M24 25l8-6" stroke="#fff" strokeWidth="3" />
            <path d="M20 3c5 0 8 2 9 8M24 8l5 4 4-5M13 29c-5 0-8-3-9-8M0 24l4-4 5 4" stroke="#5a5a5a" strokeWidth="2.200" />
          </Ico>
          <PolyMap c="ml-[22px] w-6 h-6" />
          <ToolSep c="ml-[22px]" />
          <div className="ml-3 flex h-12 w-11 items-center justify-center bg-[#c3e6fa]">
            <Ico c="w-8 h-8">
              <path d="M1 0v31h31" stroke="#6a6a6a" strokeWidth="2" />
              <path d="M6 7c8 0 14 5 15 16M14 18l7 6 6-7" stroke="#4da3dc" strokeWidth="2.400" />
            </Ico>
          </div>
          <ToolSep c="ml-3" />
          <div className="ml-3 flex h-12 w-11 items-center justify-center rounded bg-[#c3e6fa]">
            <Ico c="w-9 h-8 -mr-1" vb="0 0 34 32">
              <rect x="14" y="2" width="17" height="17" rx="2" fill="#e6f6fd" stroke="#6a6a6a" strokeWidth="2" />
              <path d="M20 3c1 4 4 5 4 9 0 2 1 4 1 6M23 11c2-3 5-4 8-4" stroke="#6a6a6a" strokeWidth="1.600" />
              <path d="M1 2v25l6-5 4 8 5-2-4-9h7z" fill="#5a5a5a" />
            </Ico>
          </div>
          <Chevron c="ml-2 w-3.5 h-3.5" w={3} />
          <Ico c="ml-[23px] w-[34px] h-8" vb="0 0 34 32">
            <path d="m19 19 11 11" stroke="#c3935a" strokeWidth="4.500" />
            <circle cx="12" cy="12" r="10" fill="#fff" stroke="#4da3dc" strokeWidth="3" />
            <path d="M6 12h12M12 6v12" stroke="#5a5a5a" strokeWidth="3.400" />
          </Ico>
          <Ico c="ml-5 w-[34px] h-8" vb="0 0 34 32">
            <path d="M1 11V1h11M22 1h11v10M33 21v10H22M12 31H1V21M2 2l9 9M32 2l-9 9M32 30l-9-9M2 30l9-9" stroke="#bdbdbd" strokeWidth="2.600" />
          </Ico>
          <Ico c="ml-auto w-7 h-8" vb="0 0 28 32">
            <path d="M11 4h17M11 12h17M11 20h17M11 28h17" stroke="#c4c4c4" strokeWidth="2" />
            <path d="M2 2h4v4H2zM2 18h4v4H2zM1 30l3-6 3 6z" stroke="#c4c4c4" strokeWidth="2" />
            <circle cx="4" cy="12" r="2" stroke="#c4c4c4" strokeWidth="2" />
          </Ico>
          <Chevron c="ml-[17px] mr-[16px] w-3.5 h-3.5" stroke="#3a3a3a" w={3} />
        </div>
        <BarChart />
      </div>
    </section>
  );
}

/* ---------- chart properties pane ---------- */

const PropCheck = () => (
  <div className="flex size-[27px] shrink-0 items-center justify-center border-2 border-[#8f8f8f] bg-white">
    <svg viewBox="0 0 20 20" className="size-5.5" fill="none">
      <path d="m1.500 10 5.500 6L17.500 2" stroke="#444" strokeWidth="3.600" />
    </svg>
  </div>
);

const FIELDS = [
  { label: "Chart title", value: "Tramos por estado - Conteo", reset: true },
  { label: "X axis title", value: "Estado de la vía", reset: true },
  { label: "Y axis title", value: "Conteo", reset: true },
  { label: "Legend title", value: "", reset: false },
];

const PANE_TABS = [
  { label: "Catalog", w: "w-[106px]" },
  { label: "Geopro...", w: "w-[134px]" },
  { label: "Symbol...", w: "w-[124px]" },
  { label: "Modify...", w: "w-[128px]" },
  { label: "Label C...", w: "w-[110px]" },
];

function Properties() {
  return (
    <section className="ml-[12px] flex w-[744px] flex-col text-[22px] text-[#4a4a4a]">
      <div className="h-[1645px] rounded-t-lg border-2 border-[#d3d4d9] border-b-0 bg-[#f7f9f8] pl-[12px]">
        <div className="flex h-[66px] items-center">
          <h2 className="w-[624px] text-[29.900px] text-[#1a1a1a] [word-spacing:1.8px]">Chart Properties - Red Vial (Estado)</h2>
          <Chevron c="w-4 h-4 -mt-1" />
          <Pin c="ml-5 -mt-1.5" />
          <Close c="ml-[19px] w-5 h-5 -mt-1.5" />
        </div>
        <div className="flex h-9 items-center text-[28.500px] text-[#5a5a5a]">
          <BarsGlyph c="ml-[5px] w-[46px] h-[46px]" />
          <span className="ml-[13px]">Tramos por estado - Conteo</span>
        </div>
        <div className="mt-[20px] flex h-[53px] text-[23.300px] text-[#5a5a5a]">
          <span className="ml-[2px] w-[73px] pt-[15px]">Data</span>
          <span className="w-[88px] pt-[15px]">Series</span>
          <span className="w-[74px] pt-[15px]">Axes</span>
          <span className="w-[100px] pt-[15px]">Guides</span>
          <span className="w-[100px] pt-[15px]">Format</span>
          <span className="h-[52px] w-[93px] border-b-4 border-[#007ac2] pt-[15px] text-[24px] font-semibold text-[#4a4a4a]">General</span>
          <Ico c="ml-[155px] mt-[7px] w-8 h-8">
            <circle cx="16" cy="16" r="14.500" fill="#e3f3fc" stroke="#55a5dc" strokeWidth="2" />
            <path d="M10.500 12.500C11 6 21 6 21 12c0 4-5 4-5 8" stroke="#55a5dc" strokeWidth="2.800" />
            <path d="M14.500 22.500h3v3.500h-3z" fill="#55a5dc" />
          </Ico>
        </div>
        <div className="mt-[45px] flex flex-col">
          {FIELDS.map((f) => (
            <div key={f.label} className="h-[114px] pt-[14px]">
              <div className="flex h-[27px] items-center text-[#1a1a1a]">
                <PropCheck />
                <span className="ml-[9px] pt-[3px] text-[22.300px] [word-spacing:1.5px]">{f.label}</span>
                {f.reset && <Reset c="ml-[15px]" />}
              </div>
              <div className="mt-[15px] flex h-[46px] w-[716px] items-center border-2 border-[#909090] bg-white pl-[10px] pt-[3px] text-[20.700px] text-[#5a5a5a]">{f.value}</div>
            </div>
          ))}
          <div className="pt-[14px]">
            <div className="flex h-[27px] items-center text-[#1a1a1a]">
              <PropCheck />
              <span className="ml-[9px] pt-[3px] text-[22.300px]">Description</span>
            </div>
            <div className="mt-[15px] h-[166px] w-[716px] border-2 border-[#909090] bg-white" />
          </div>
        </div>
      </div>
      <div className="flex h-[41px]">
        <div className="flex w-[617px] items-center border-t-2 border-[#d3d4d9] pl-3">
          {PANE_TABS.map((t) => (
            <span key={t.label} className={t.w}>{t.label}</span>
          ))}
        </div>
        <div className="flex w-[127px] items-center rounded-b-lg border-2 border-t-0 border-[#d3d4d9] bg-[#f7f9f8] pl-[9px] text-[22.500px] text-[#007ac2]">Chart Pr...</div>
      </div>
    </section>
  );
}

export default function App() {
  return (
    <div className="flex h-[1838px] w-[3072px] flex-col overflow-hidden bg-[#eaeaea] font-['Noto_Sans','Open_Sans',sans-serif] leading-none whitespace-nowrap">
      <header className="h-[115px] border-b-2 border-[#c0c3c9] bg-[#f7f9f8]">
        <TitleBar />
        <Menu />
      </header>
      <main className="flex h-[1710px] pt-3">
        <Contents />
        <div className="ml-3 w-[1850px]">
          <MapPane />
          <ChartPane />
        </div>
        <Properties />
      </main>
      <footer className="h-[13px] border-t-2 border-[#bcbcbc] bg-[#eeeeee]" />
    </div>
  );
}
